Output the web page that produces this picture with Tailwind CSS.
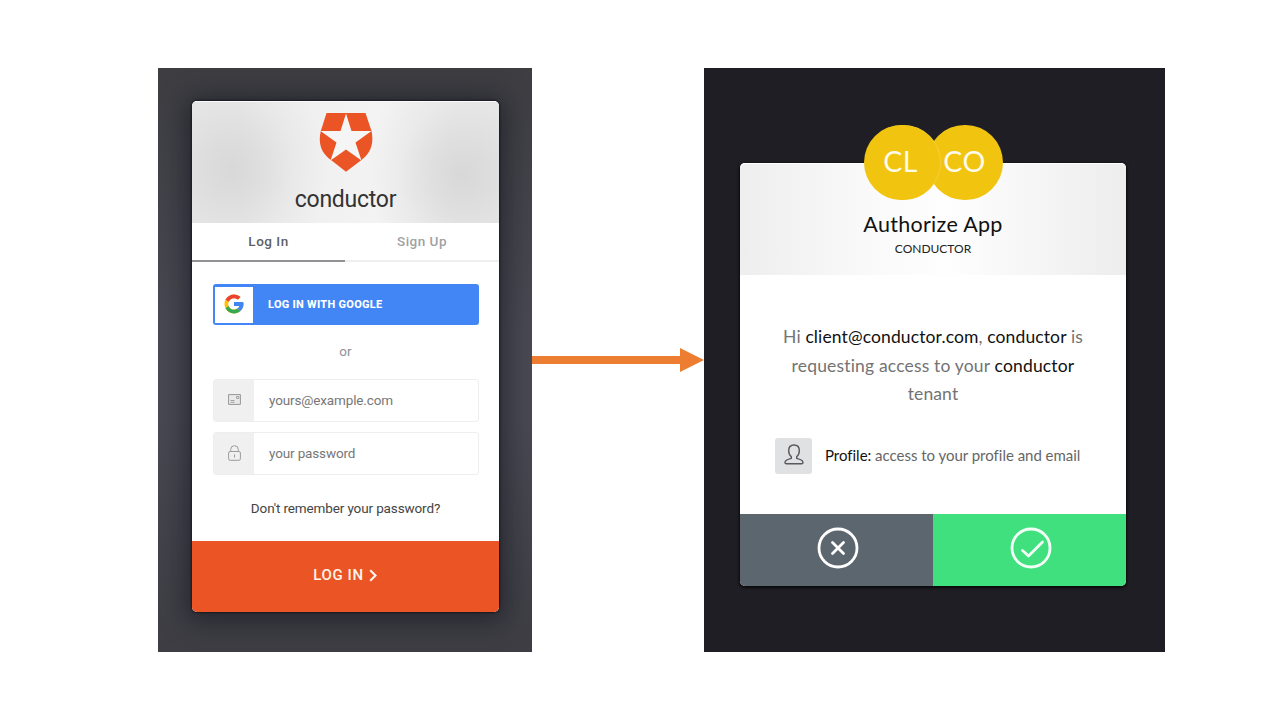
<!DOCTYPE html>
<html lang="en">
<head>
<meta charset="utf-8">
<title>Conductor sign-in flow</title>
<script src="https://cdn.jsdelivr.net/npm/@tailwindcss/browser@4"></script>
</head>
<body class="bg-white w-[1280px] h-[720px] overflow-hidden">
<main class="flex pt-[68px] pl-[158px]">

  <!-- Login screen -->
  <section class="w-[374px] h-[584px] shrink-0 overflow-hidden pt-[33px] pl-[34px] font-['Roboto',sans-serif] bg-[linear-gradient(to_bottom,#3d3d42,#484852_45%,#484852_60%,#3d3d43)]">
    <div class="w-[307px] h-[511px] rounded-[5px] shadow-[0_3px_26px_6px_rgba(12,12,24,0.5),0_0_2px_1px_rgba(10,8,22,0.6)]">
      <div class="size-full rounded-[5px] overflow-hidden bg-white flex flex-col">
        <header class="h-[122px] shrink-0 flex flex-col items-center pt-[10px] border-t border-[#fafafa] bg-[radial-gradient(ellipse_95px_110px_at_13%_55%,#d8d8d8,#d8d8d8b3_30%,#d8d8d840_65%,#d8d8d800),radial-gradient(ellipse_95px_110px_at_88%_60%,#d8d8d8,#d8d8d8b3_30%,#d8d8d840_65%,#d8d8d800),linear-gradient(90deg,#e9e9e9,#f1f1f1_45%,#f3f3f3_60%,#e9e9e9)]">
          <svg class="w-[54px] h-[60px] shrink-0" viewBox="318.5 112 54 60"><path fill="#eb5424" d="M326 113H365L371 131C374 145 369 154 361 160L345.500 171.700L330.500 160C322 154 317 145 320.300 131Z"/><path fill="#f5f5f5" d="M345.500 113.500L351 131H371L355 142.500L361 160.500L345.500 149.500L330 160.500L336 142.500L320 131H340Z"/></svg>
          <h1 class="text-[23px] leading-7 mt-[14px] text-[#333333] whitespace-nowrap tracking-[-0.250px]">conductor</h1>
        </header>
        <nav class="h-[39px] shrink-0 flex text-[13.500px] font-medium leading-[36px] text-center tracking-[0.500px]">
          <div class="w-[153px] border-b-2 border-[#929297] text-[#5c5f66]">Log In</div>
          <div class="w-[154px] border-b-2 border-[#efeff0] text-[#a0a1a5]">Sign Up</div>
        </nav>
        <div class="px-[21px] pt-[22px] h-[279px] w-[308px] shrink-0 flex flex-col">
          <button class="h-[41px] w-full rounded-[3px] bg-[#4285f4] flex items-center pl-[2px] text-left">
            <span class="w-[38px] h-[36px] bg-white flex items-center justify-center">
              <svg class="size-[20px] -ml-[1px] -mt-[1px]" viewBox="3 3 42 42"><path fill="#FFC107" d="M43.611 20.083H42V20H24v8h11.303C33.654 32.657 29.223 36 24 36c-6.627 0-12-5.373-12-12s5.373-12 12-12c3.059 0 5.842 1.154 7.961 3.039l5.657-5.657C34.046 6.053 29.268 4 24 4 12.955 4 4 12.955 4 24s8.955 20 20 20 20-8.955 20-20c0-1.341-.138-2.650-.389-3.917z"/><path fill="#EA4335" d="M6.306 14.691l6.571 4.819C14.655 15.108 18.961 12 24 12c3.059 0 5.842 1.154 7.961 3.039l5.657-5.657C34.046 6.053 29.268 4 24 4 16.318 4 9.656 8.337 6.306 14.691z"/><path fill="#34A853" d="M24 44c5.166 0 9.860-1.977 13.409-5.192l-6.190-5.238C29.211 35.091 26.715 36 24 36c-5.202 0-9.619-3.317-11.283-7.946l-6.522 5.025C9.505 39.556 16.227 44 24 44z"/><path fill="#4285F4" d="M43.611 20.083H42V20H24v8h11.303a12.040 12.040 0 0 1-4.087 5.571l6.193 5.238C36.971 39.205 44 34 44 24c0-1.341-.138-2.650-.389-3.917z"/></svg>
            </span>
            <span class="ml-[15px] pt-[1px] text-[11px] font-extrabold text-white tracking-[0.270px]">LOG IN WITH GOOGLE</span>
          </button>
          <p class="h-[54px] text-center leading-[53px] pr-[1px] text-[13.500px] text-[#919195]">or</p>
          <div class="h-[43px] w-full rounded-[3px] border border-[#eeeeee] flex overflow-hidden">
            <span class="w-[40px] bg-[#f0f0f0] flex items-center justify-center pb-[2px]">
              <svg class="w-[13px] h-[11px]" viewBox="0 0 13 11"><path d="M.6.600H12.400V10.400H.6Z" fill="#e9e9e9" stroke="#969696"/><path d="M8.500 2.500h2.300v2H8.500Z" fill="#ddd" stroke="#999" stroke-width=".8"/><path d="M2.500 6.500h4M2.500 8.300h4" stroke="#a4a4a4"/></svg>
            </span>
            <span class="text-[13.500px] leading-[40px] text-[#777777] ml-[15px] tracking-[-0.140px]">yours@example.com</span>
          </div>
          <div class="h-[43px] mt-[10px] w-full rounded-[3px] border border-[#eeeeee] flex overflow-hidden">
            <span class="w-[40px] bg-[#f0f0f0] flex items-center justify-center pb-[2px]">
              <svg class="w-[13px] h-[16px]" viewBox="0 0 13 16" fill="none" stroke="#9c9c9c"><rect x=".6" y="6.500" width="11.800" height="8.800" rx="1.500"/><path d="M2.700 6.300V4.500a3.800 3.800 0 0 1 7.600 0v1.800M6.500 9.300v3.200"/></svg>
            </span>
            <span class="text-[13.500px] leading-[40px] text-[#777777] ml-[15px] tracking-[-0.140px]">your password</span>
          </div>
          <p class="text-center text-[13.500px] leading-5 mt-[23px] pr-[1px] text-[#444444] tracking-[-0.130px]">Don't remember your password?</p>
        </div>
        <button class="h-[71px] shrink-0 bg-[#eb5424] text-[#fff4e8] text-[15px] font-medium tracking-[0.600px] flex items-center justify-center pb-[2px] pr-[1px]">
          <span>LOG IN</span>
          <svg class="w-[8px] h-[13px] ml-[5px] -mt-[1px]" viewBox="0 0 8 13" fill="none" stroke="currentColor" stroke-width="2.200"><path d="M1.200 1.200L6.500 6.500L1.200 11.800"/></svg>
        </button>
      </div>
    </div>
  </section>

  <!-- Connector arrow -->
  <svg class="w-[172px] h-[24px] shrink-0 mt-[280px]" viewBox="0 0 172 24" fill="#ed7d31"><path d="M0 8H148V0L172 12L148 24V16H0Z"/></svg>

  <!-- Consent screen -->
  <section class="w-[461px] h-[584px] shrink-0 bg-[#1f1e24] pt-[95px] pl-[36px] font-['Lato',sans-serif] [font-variant-ligatures:none]">
    <div class="w-[386px] h-[423px] rounded-[5px] bg-white flex flex-col shadow-[0_1px_3px_1px_rgba(0,0,0,0.7)]">
      <header class="h-[112px] shrink-0 rounded-t-[5px] border-t border-white flex flex-col items-center bg-[linear-gradient(90deg,#eeeeee,#fafafa_35%,#fefefe_54%,#f8f8f8_70%,#ededed)]">
        <div class="flex -mt-[39px] h-[75px] shrink-0 text-[28.500px] text-[#fffbea] leading-[73px] text-center">
          <div class="w-[76px] h-[75px] rounded-full bg-[#f1c40f] z-10 shadow-[1px_0_0_0_#f3cf3c] pr-[2px] tracking-[0.500px]">CL</div>
          <div class="w-[76px] h-[75px] rounded-full bg-[#f1c40f] -ml-[13px] tracking-[0.500px]">CO</div>
        </div>
        <h2 class="text-[21.500px] leading-7 mt-[10px] text-[#111111] whitespace-nowrap tracking-[0.300px]">Authorize App</h2>
        <p class="text-[12px] leading-4 mt-[3px] text-[#222222]">CONDUCTOR</p>
      </header>
      <div class="h-[239px] shrink-0 pt-[48px]">
        <p class="text-center text-[17.500px] leading-[28.500px] text-[#737373] whitespace-nowrap tracking-[0.120px]">Hi <span class="text-[#111111]">client@conductor.com</span>, <span class="text-[#111111]">conductor</span> is<br><span class="tracking-[0.170px]">requesting access to your <span class="text-[#111111]">conductor</span></span><br>tenant</p>
        <div class="flex items-center mt-[29px] pl-[35px]">
          <span class="w-[37px] h-[36px] rounded-[3px] bg-[#e0e1e2] flex items-center justify-center">
            <svg class="w-[20px] h-[21px] -mt-[2px]" viewBox="0 0 20 21" fill="none" stroke="#58595c" stroke-width="1.400" stroke-linejoin="round"><path d="M7.300 12.700C5.400 11.400 4.700 9 4.700 6.500C4.700 3 6.800 1 10 1s5.300 2 5.300 5.500c0 2.500-.7 4.900-2.600 6.200v1.700c3.300.8 6.300 1.600 6.300 4.200 0 .8-.6 1.200-1.400 1.200H2.400C1.600 19.800 1 19.400 1 18.600c0-2.600 3-3.400 6.300-4.200Z"/></svg>
          </span>
          <p class="ml-[13px] pb-[2px] text-[15px] leading-5 text-[#666666] whitespace-nowrap tracking-[-0.020px]"><span class="text-[#111111]">Profile:</span> access to your profile and email</p>
        </div>
      </div>
      <footer class="h-[72px] flex">
        <button class="w-[193px] rounded-bl-[5px] bg-[#5c666f] flex justify-center pt-[13px] pl-[3px]">
          <svg class="size-[42px]" viewBox="0 0 42 42" fill="none" stroke="#fff" stroke-width="2.800" stroke-linecap="round"><circle cx="21" cy="21" r="19"/><path d="M15.500 15.500l11 11M26.500 15.500l-11 11"/></svg>
        </button>
        <button class="w-[193px] rounded-br-[5px] bg-[#40e07f] flex justify-center pt-[13px] pl-[3px]">
          <svg class="size-[42px]" viewBox="0 0 42 42" fill="none" stroke="#f2fff7" stroke-width="2.800" stroke-linecap="round" stroke-linejoin="round"><circle cx="21" cy="21" r="19"/><path d="M12.500 23.500l6 5.500L32.500 15"/></svg>
        </button>
      </footer>
    </div>
  </section>
</main>
</body>
</html>
